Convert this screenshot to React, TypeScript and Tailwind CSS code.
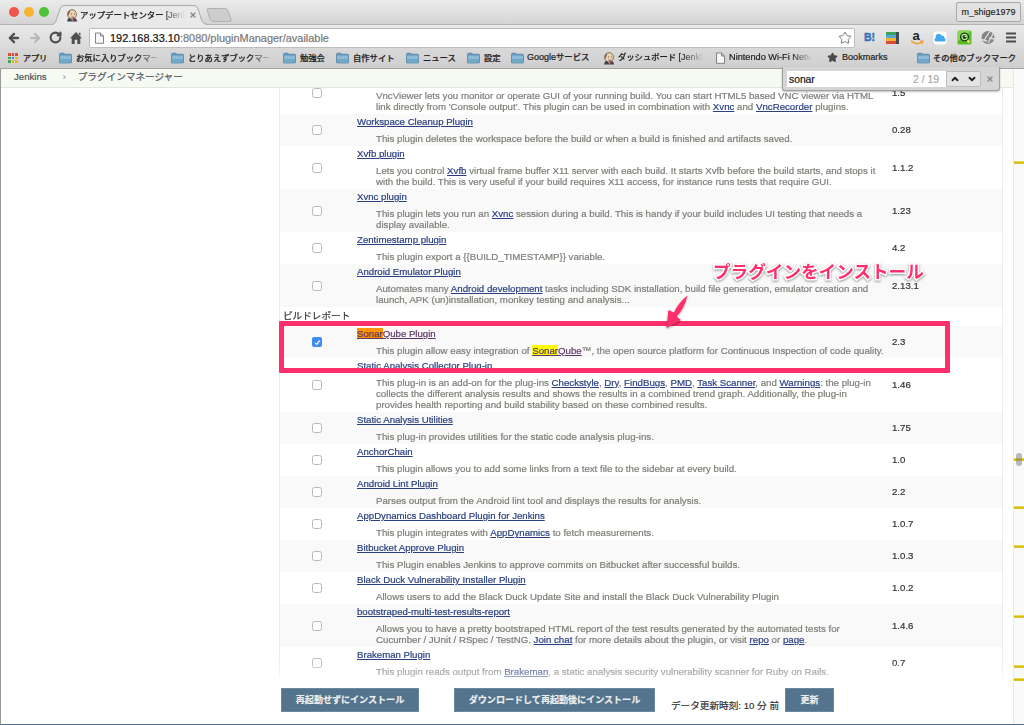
import React from 'react';
import { ArrowLeft, ArrowRight, RotateCw, Star, X, ChevronUp, ChevronDown } from 'lucide-react';

interface Plugin {
  title: React.ReactNode;
  lines: React.ReactNode[];
  version: string;
  checked?: boolean;
  visited?: boolean;
}

const Link: React.FC<{ children: React.ReactNode }> = ({ children }) => (
  <a className="text-[#2a4080] underline">{children}</a>
);

const toolPlugins: Plugin[] = [
  {
    title: 'VncViewer Plugin',
    lines: [
      'VncViewer lets you monitor or operate GUI of your running build. You can start HTML5 based VNC viewer via HTML',
      <>link directly from 'Console output'. This plugin can be used in combination with <Link>Xvnc</Link> and <Link>VncRecorder</Link> plugins.</>,
    ],
    version: '1.5',
  },
  {
    title: 'Workspace Cleanup Plugin',
    lines: ['This plugin deletes the workspace before the build or when a build is finished and artifacts saved.'],
    version: '0.28',
  },
  {
    title: 'Xvfb plugin',
    lines: [
      <>Lets you control <Link>Xvfb</Link> virtual frame buffer X11 server with each build. It starts Xvfb before the build starts, and stops it</>,
      'with the build. This is very useful if your build requires X11 access, for instance runs tests that require GUI.',
    ],
    version: '1.1.2',
  },
  {
    title: 'Xvnc plugin',
    lines: [
      <>This plugin lets you run an <Link>Xvnc</Link> session during a build. This is handy if your build includes UI testing that needs a</>,
      'display available.',
    ],
    version: '1.23',
  },
  {
    title: 'Zentimestamp plugin',
    lines: ['This plugin export a {{BUILD_TIMESTAMP}} variable.'],
    version: '4.2',
  },
  {
    title: 'Android Emulator Plugin',
    lines: [
      <>Automates many <Link>Android development</Link> tasks including SDK installation, build file generation, emulator creation and</>,
      'launch, APK (un)installation, monkey testing and analysis...',
    ],
    version: '2.13.1',
  },
];

const reportPlugins: Plugin[] = [
  {
    title: <><span className="bg-[#ff9500]">Sonar</span>Qube Plugin</>,
    lines: [
      <>This plugin allow easy integration of <a className="text-[#5c3566] underline"><span className="bg-[#ffff00]">Sonar</span>Qube</a>™, the open source platform for Continuous Inspection of code quality.</>,
    ],
    version: '2.3',
    checked: true,
    visited: true,
  },
  {
    title: 'Static Analysis Collector Plug-in',
    lines: [
      <>This plug-in is an add-on for the plug-ins <Link>Checkstyle</Link>, <Link>Dry</Link>, <Link>FindBugs</Link>, <Link>PMD</Link>, <Link>Task Scanner</Link>, and <Link>Warnings</Link>: the plug-in</>,
      'collects the different analysis results and shows the results in a combined trend graph. Additionally, the plug-in',
      'provides health reporting and build stability based on these combined results.',
    ],
    version: '1.46',
  },
  {
    title: 'Static Analysis Utilities',
    lines: ['This plug-in provides utilities for the static code analysis plug-ins.'],
    version: '1.75',
  },
  {
    title: 'AnchorChain',
    lines: ['This plugin allows you to add some links from a text file to the sidebar at every build.'],
    version: '1.0',
  },
  {
    title: 'Android Lint Plugin',
    lines: ['Parses output from the Android lint tool and displays the results for analysis.'],
    version: '2.2',
  },
  {
    title: 'AppDynamics Dashboard Plugin for Jenkins',
    lines: [<>This plugin integrates with <Link>AppDynamics</Link> to fetch measurements.</>],
    version: '1.0.7',
  },
  {
    title: 'Bitbucket Approve Plugin',
    lines: ['This Plugin enables Jenkins to approve commits on Bitbucket after successful builds.'],
    version: '1.0.3',
  },
  {
    title: 'Black Duck Vulnerability Installer Plugin',
    lines: ['Allows users to add the Black Duck Update Site and install the Black Duck Vulnerability Plugin'],
    version: '1.0.2',
  },
  {
    title: 'bootstraped-multi-test-results-report',
    lines: [
      'Allows you to have a pretty bootstraped HTML report of the test results generated by the automated tests for',
      <>Cucumber / JUnit / RSpec / TestNG. <Link>Join chat</Link> for more details about the plugin, or visit <Link>repo</Link> or <Link>page</Link>.</>,
    ],
    version: '1.4.6',
  },
  {
    title: 'Brakeman Plugin',
    lines: [<>This plugin reads output from <Link>Brakeman</Link>, a static analysis security vulnerability scanner for Ruby on Rails.</>],
    version: '0.7',
  },
];

const CheckBox: React.FC<{ checked?: boolean }> = ({ checked }) =>
  checked ? (
    <span className="flex size-[10px] items-center justify-center rounded-[2px] bg-[#3f8cf7]">
      <svg width="7" height="7" viewBox="0 0 7 7" fill="none" stroke="#fff" strokeWidth="1.2">
        <path d="M1.2 3.8 2.8 5.4 5.8 1.4" />
      </svg>
    </span>
  ) : (
    <span className="size-[10px] rounded-[2.5px] border border-[#b9b9b9] bg-white" />
  );

const PluginRow: React.FC<{ plugin: Plugin; striped: boolean }> = ({ plugin, striped }) => (
  <div className={`flex shrink-0 items-stretch ${striped ? 'bg-[#f9f9f9]' : 'bg-white'}`}>
    <div className="flex w-[74px] items-center justify-center">
      <CheckBox checked={plugin.checked} />
    </div>
    <div className="w-[538px] pt-[2px] pb-[2px] pl-[3px] whitespace-nowrap">
      <div className="h-3 leading-[12px]">
        <a className={`underline ${plugin.visited ? 'text-[#5c3566]' : 'text-[#2a4080]'}`}>{plugin.title}</a>
      </div>
      <div className="mt-[5px] pl-[19px] text-[9.7px] leading-[11px] text-[#7c7e77]">
        {plugin.lines.map((line, i) => (
          <div key={i} className="h-[11px]">{line}</div>
        ))}
      </div>
    </div>
    <div className="flex items-center pt-px text-[#333]">{plugin.version}</div>
  </div>
);

const Folder = () => (
  <svg width="13" height="12" viewBox="0 0 13 12">
    <path d="M.5 2.2q0-1 1-1h3.3l1 1h5.7q1 0 1 1v7.3q0 .5-.5.5H1q-.5 0-.5-.5z" fill="#6299bd" stroke="#517f9f" strokeWidth=".7" />
    <path d="M1 3.6h11v6.7H1z" fill="#8bbbd8" />
    <path d="M1 7h11v3.5H1z" fill="#71a8c9" />
  </svg>
);

const Page = () => (
  <svg width="9" height="12" viewBox="0 0 9 12" fill="#f8f8f8" stroke="#777" strokeWidth=".9">
    <path d="M.5 1h5l3 3v7.3h-8zM5.5 1v3h3" />
  </svg>
);

const Butler = () => (
  <svg width="12" height="13" viewBox="0 0 12 13">
    <path d="M1 12.5 2 9.5l3-1 5 1 1.3 3z" fill="#3b4352" />
    <path d="M4.5 9.5h3l-1 2.5z" fill="#fff" />
    <path d="M5 10.5 8.5 10l-.4 2z" fill="#c8352c" />
    <ellipse cx="6" cy="5.3" rx="4.5" ry="4.7" fill="#ecd0ad" stroke="#45372e" strokeWidth=".6" />
    <path d="M2 7Q1 2.8 4.3 1L3.5 4.2z" fill="#7c6554" />
    <path d="M5 5h.9M8 5h.8M5.5 8q1.4.7 2.5 0" stroke="#423127" strokeWidth=".8" fill="none" />
  </svg>
);

const appColors = ['#e2483d', '#e2483d', '#e2483d', '#46a657', '#4186ec', '#f1b51c', '#46a657', '#f1b51c', '#f1b51c'];

const Apps = () => (
  <div className="grid grid-cols-3 gap-px">
    {appColors.map((c, i) => (
      <span key={i} className="size-[2.6px]" style={{ backgroundColor: c }} />
    ))}
  </div>
);

const Bookmark: React.FC<{ icon: React.ReactNode; className: string; children: React.ReactNode }> = ({ icon, className, children }) => (
  <div className={`flex shrink-0 items-center gap-1 overflow-hidden whitespace-nowrap ${className}`}>
    <span className="shrink-0">{icon}</span>
    {children}
  </div>
);

const fade = '[mask-image:linear-gradient(90deg,#000_75%,transparent)]';

const BookmarkBar = () => (
  <div className="flex h-[21px] items-center border-b border-[#a3a3a3] bg-gradient-to-b from-[#d9d9d9] to-[#cfcfcf] pl-[7px] text-[8.3px] font-medium text-[#222]">
    <Bookmark icon={<Apps />} className="w-[52px] pl-px"><span className="pl-px tracking-[-0.2px]">アプリ</span></Bookmark>
    <Bookmark icon={<Folder />} className="w-[112px]"><span className={fade}>お気に入りブックマー</span></Bookmark>
    <Bookmark icon={<Folder />} className="w-[112px]"><span className={fade}>とりあえずブックマー</span></Bookmark>
    <Bookmark icon={<Folder />} className="w-[53px]">勉強会</Bookmark>
    <Bookmark icon={<Folder />} className="w-[70px]">自作サイト</Bookmark>
    <Bookmark icon={<Folder />} className="w-[61px]">ニュース</Bookmark>
    <Bookmark icon={<Folder />} className="w-[44px]">設定</Bookmark>
    <Bookmark icon={<Folder />} className="w-[92px]"><span className="-ml-px"><span className="text-[9px]">Google</span>サービス</span></Bookmark>
    <Bookmark icon={<Butler />} className="w-[113px]"><span className={`-ml-px w-[85px] overflow-hidden ${fade}`}>ダッシュボード <span className="text-[9px]">[Jenkins]</span></span></Bookmark>
    <Bookmark icon={<Page />} className="w-[111px]"><span className={`w-[83px] overflow-hidden text-[9.2px] ${fade}`}>Nintendo Wi-Fi Network</span></Bookmark>
    <Bookmark icon={<Star size={11} fill="#4a4a4a" stroke="#4a4a4a" />} className="w-[90px]"><span className="text-[9.1px]">Bookmarks</span></Bookmark>
    <Bookmark icon={<Folder />} className=""><span className="-ml-px">その他のブックマーク</span></Bookmark>
  </div>
);

const TabStrip = () => (
  <div className="flex h-[25px] items-end border-b border-[#b4b4b4] bg-gradient-to-b from-[#ebebeb] to-[#d4d4d4] [-webkit-text-stroke:0.15px]">
    <div className="flex gap-[5px] self-start pt-[7px] pl-[9px]">
      <span className="size-[10px] rounded-full bg-[#f0544d]" />
      <span className="size-[10px] rounded-full bg-[#f5b52e]" />
      <span className="size-[10px] rounded-full bg-[#4fc13b]" />
    </div>
    <div className="relative -mb-px ml-[3px] flex h-5 w-[156px] items-center pl-[14px]">
      <svg className="absolute inset-0" width="156" height="20" viewBox="0 0 156 20">
        <path d="M0 20Q3 19 4 16L8 4Q9 .5 12 .5H142Q145 .5 146 4L150 16Q151 19 156 20z" fill="#e9e9e9" />
        <path d="M0 19.5Q3 19 4 16L8 4Q9 .5 12 .5H142Q145 .5 146 4L150 16Q151 19 156 19.5" fill="none" stroke="#a9a9a9" />
      </svg>
      <span className="relative"><Butler /></span>
      <span className="relative ml-[2px] w-[105px] overflow-hidden text-[8.5px] leading-[14px] font-medium tracking-[-0.15px] whitespace-nowrap text-[#222] [mask-image:linear-gradient(90deg,#000_80%,transparent)]">アップデートセンター <span className="text-[9.2px]">[Jenkins]</span></span>
      <X className="relative ml-[4px]" size={8} strokeWidth={4} color="#8a8a8a" />
    </div>
    <svg className="mb-[2px] -ml-[2px]" width="26" height="14" viewBox="0 0 26 14">
      <path d="M1 1.5Q1 .5 2 .5H19Q21 .5 22 3L25 11Q26 13.5 23 13.5H8Q5 13.5 4 11z" fill="#cdcdcd" stroke="#b0b0b0" />
    </svg>
    <div className="mr-[3px] mb-[2px] ml-auto flex h-5 w-[65px] items-center justify-center rounded-[2px] border border-[#a9a9a9] bg-[#e2e2e2] pt-[2px] text-[9px] text-[#222]">m_shige1979</div>
  </div>
);

const Extensions = () => (
  <div className="ml-2 flex items-center">
    <span className="w-[22px] pl-[1px] text-[10.5px] font-bold text-[#3173b8] [-webkit-text-stroke:0.4px]">B!</span>
    <svg className="ml-px" width="14" height="14" viewBox="0 0 14 14">
      <path d="M0 1h10v3H0z" fill="#3aa45b" />
      <path d="M0 4h10v3H0z" fill="#55a8dc" />
      <path d="M0 7h10v3H0z" fill="#f0b429" />
      <path d="M0 10h10v3H0z" fill="#dc483d" />
      <path d="M10 1h3v12h-3z" fill="#444b52" />
    </svg>
    <svg className="ml-[10px]" width="14" height="16" viewBox="0 0 14 16">
      <text x="2.5" y="10.3" fontSize="13" fontWeight="bold" fill="#222">a</text>
      <path d="M1 10.8Q7 16 12.5 11.5l-.8 2.5M12.7 11.5l-3-.2" fill="none" stroke="#eba13c" strokeWidth="1.6" />
    </svg>
    <svg className="ml-[9px]" width="14" height="14" viewBox="0 0 14 14">
      <rect x=".5" y=".5" width="13" height="13" rx="3" fill="#fff" />
      <path d="M3 10.5a2 2 0 0 1-.2-3.8A3 3 0 0 1 8.4 4.6a2.6 2.6 0 0 1 3.2 2.6 1.7 1.7 0 0 1-.4 3.3z" fill="#45a9ef" />
    </svg>
    <svg className="ml-[10px]" width="15" height="15" viewBox="0 0 15 15">
      <rect x=".5" y=".5" width="14" height="14" rx="1.5" fill="#58bd2b" />
      <path d="M1 1h13L1 11z" fill="#88d84d" />
      <circle cx="7.5" cy="7" r="3.9" fill="#b9f08e" stroke="#1d3d1c" strokeWidth="1.4" />
      <circle cx="7.5" cy="7" r="2" fill="#1d3d1c" />
      <circle cx="8.3" cy="6.3" r=".8" fill="#fff" />
      <path d="M10.5 10.5l2 2" stroke="#f3e75a" strokeWidth="2.4" />
    </svg>
    <svg className="ml-2" width="16" height="15" viewBox="0 0 16 15">
      <circle cx="8" cy="7.5" r="6.5" fill="#858585" />
      <path d="M11 0 4.5 9.5M14 2 8 13M1.5 9.5l5.5 1.5M9 8l6 1" stroke="#dedede" strokeWidth="1.3" />
    </svg>
    <svg className="ml-[10px]" width="10" height="11" viewBox="0 0 10 11" fill="#4c4c4c">
      <path d="M0 .5h10v2H0zM0 4.5h10v2H0zM0 8.5h10v2H0z" />
    </svg>
  </div>
);

const Toolbar = () => (
  <div className="flex h-[23px] items-center bg-gradient-to-b from-[#e9e9e9] to-[#dadada] pt-[2px]">
    <ArrowLeft className="ml-[7px]" size={14} strokeWidth={4} color="#505050" />
    <ArrowRight className="ml-[7px]" size={14} strokeWidth={3.5} color="#b8b8b8" />
    <RotateCw className="ml-[7px]" size={13} strokeWidth={4} color="#505050" />
    <svg className="ml-2" width="12" height="12" viewBox="0 0 12 12" fill="#505050">
      <path d="M6 0l6 6.3h-1.7V12H7.3V7.8H4.7V12H1.7V6.3H0zM8.8.7h1.6v3L8.8 2z" />
    </svg>
    <div className="ml-[7px] flex h-[20px] w-[766px] items-center rounded-[2px] border border-[#bdbdbd] bg-white pr-[2px] pl-[5px]">
      <Page />
      <span className="ml-[6px] text-[10.95px] leading-[14px] text-[#777]"><span className="text-[#111]">192.168.33.10</span>:8080/pluginManager/available</span>
      <Star className="ml-auto" size={14} strokeWidth={1.6} color="#6d6d6d" />
    </div>
    <Extensions />
  </div>
);

const FindBar = () => (
  <div className="absolute top-[67px] left-[782px] flex h-[24px] w-[218px] items-center rounded-b-[3px] border border-t-0 border-[#a0a0a0] bg-[#d5d5d5] pl-[4px] shadow-[0_1px_2px_rgba(0,0,0,0.25)]">
    <div className="flex h-[16px] w-[159px] items-center justify-between bg-white pt-[2px] pr-[7px] pl-[2px] text-[10px]">
      <span className="text-[10.3px] text-[#111]">sonar</span>
      <span className="text-[10.4px] text-[#aaa]">2 / 19</span>
    </div>
    <div className="flex h-[16px] w-[35px] items-center justify-around rounded-r-[2px] border border-[#bdbdbd] bg-[#e4e4e4]">
      <ChevronUp size={10} strokeWidth={4.5} color="#222" />
      <ChevronDown size={10} strokeWidth={4.5} color="#222" />
    </div>
    <X className="ml-[5px]" size={8} strokeWidth={4} color="#8a8a8a" />
  </div>
);

const hitMarks = [162, 459, 507, 546, 616, 666, 679];

const ScrollTrack = () => (
  <div className="relative w-[11px] shrink-0 border-l border-[#e8e8e8] bg-[#fafafa]">
    {hitMarks.map((y) => (
      <span key={y} className="absolute left-0 h-[3px] w-full border-y border-t-[#e8d65a] border-b-[#d8c430] bg-[#d9bd00]" style={{ top: y - 70 }} />
    ))}
    <span className="absolute top-[384px] left-[2px] h-[13px] w-[6px] rounded-full bg-[#777]/50" />
  </div>
);

const ActionButton: React.FC<{ className: string; children: React.ReactNode }> = ({ className, children }) => (
  <button className={`h-[24px] shrink-0 border border-[#6a899e] bg-[#53748c] pt-px text-[9.05px] font-bold text-[#eee] ${className}`}>{children}</button>
);

// Red box, arrow and caption drawn over the page
const Annotation = () => (
  <>
    <div className="absolute top-[321px] left-[279px] h-[52px] w-[671px] rounded-[1px] border-[5px] border-[#ff2e6d]" />
    <svg className="absolute top-[292px] left-[660px] drop-shadow-[0_1px_1px_rgba(0,0,0,0.4)]" width="32" height="40" viewBox="0 0 32 40">
      <path d="M27.5 3.5Q19 10 14 20.5L8.5 18 6.5 36 21 28l-4.5-3.5Q24 17 27.5 3.5z" fill="#ff2e6d" />
    </svg>
    <div className="absolute top-[259px] left-[713px] text-[17.6px] leading-[26px] font-bold whitespace-nowrap text-[#ff2e6d] [paint-order:stroke_fill] [-webkit-text-stroke:3px_#fff] drop-shadow-[0_1px_1px_rgba(0,0,0,0.4)]">プラグインをインストール</div>
  </>
);

export default function App() {
  return (
    <div className="relative flex h-[725px] w-[1024px] flex-col overflow-hidden bg-white font-['Liberation_Sans','Noto_Sans_CJK_JP',sans-serif] text-[9.65px] [-webkit-text-stroke:0.2px]">
      <TabStrip />
      <Toolbar />
      <BookmarkBar />
      <div className="flex min-h-0 flex-1 border-b border-b-[#536c93] border-l border-l-[#999]">
        <div className="flex min-w-0 flex-1 flex-col">
          <div className="flex h-[19px] shrink-0 items-center border-b border-[#e2e6dc] bg-[#f6faf2] pb-px pl-[13px] text-[#4d545d]">
            <span>Jenkins</span>
            <span className="ml-[16px] text-[9px] text-[#999]">›</span>
            <span className="ml-[12px]">プラグインマネージャー</span>
          </div>
          <div className="ml-[278px] flex h-[592px] w-[724px] flex-col overflow-hidden border-x border-[#ececec] [mask-image:linear-gradient(#000_572px,rgba(0,0,0,0.55)_588px,transparent_592px)]">
            <div className="-mt-[17px] flex flex-col">
              {toolPlugins.map((p, i) => (
                <PluginRow key={i} plugin={p} striped={i % 2 === 1} />
              ))}
              <div className="flex h-[19px] items-center pl-[3px] text-[#333]">ビルドレポート</div>
              {reportPlugins.map((p, i) => (
                <PluginRow key={i} plugin={p} striped={i % 2 === 0} />
              ))}
            </div>
          </div>
          <div className="flex items-start pt-[8px] pl-[280px]">
            <ActionButton className="w-[138px]">再起動せずにインストール</ActionButton>
            <ActionButton className="ml-[35px] w-[201px]">ダウンロードして再起動後にインストール</ActionButton>
            <span className="mt-[11px] ml-[16px] w-[114px] leading-[14px] whitespace-nowrap text-[#333]">データ更新時刻: 10 分 前</span>
            <ActionButton className="w-[49px]">更新</ActionButton>
          </div>
        </div>
        <ScrollTrack />
      </div>
      <FindBar />
      <Annotation />
    </div>
  );
}
